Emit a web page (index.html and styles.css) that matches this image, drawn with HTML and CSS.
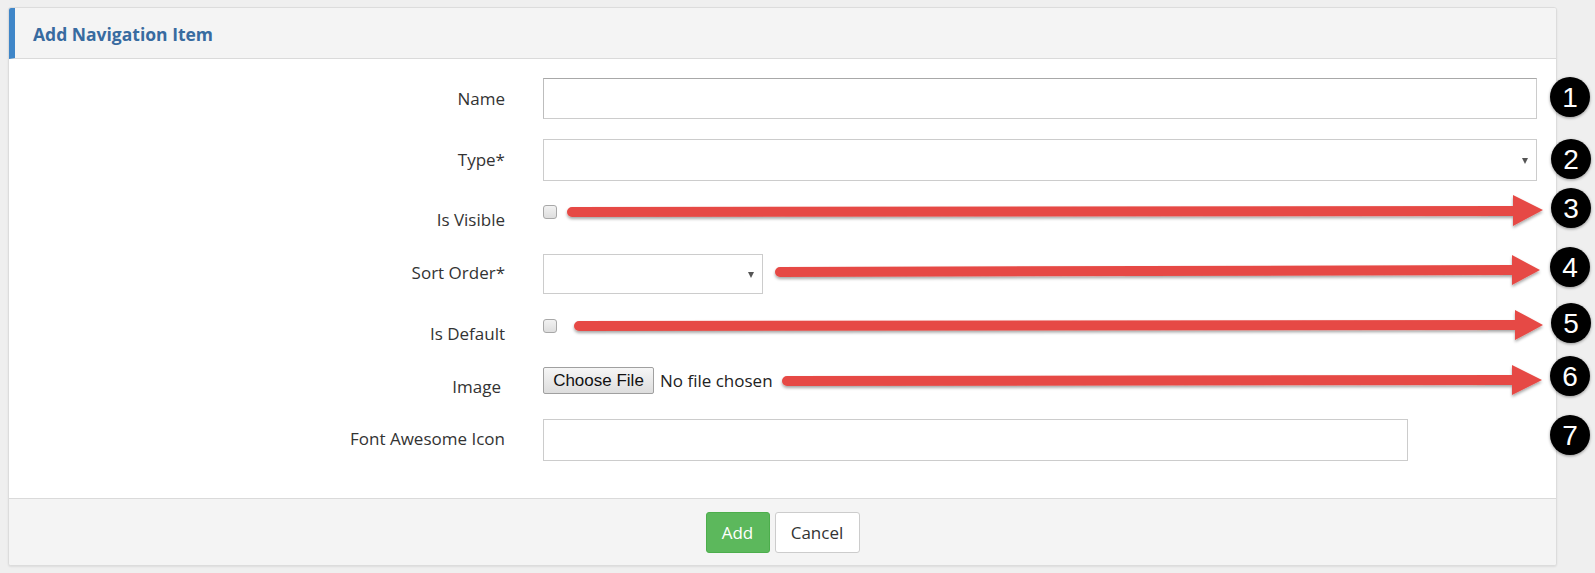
FILE: index.html
```html
<!DOCTYPE html>
<html>
<head>
<meta charset="utf-8">
<link rel="stylesheet" href="styles.css">
</head>
<body>
<div class="page">
  <div class="panel">
    <div class="panel-head"><h3 class="panel-title">Add Navigation Item</h3></div>
    <div class="panel-body">
      <div class="row r1">
        <div class="lbl">Name</div>
        <div class="ctl"><div class="input input-focus w-full"></div></div>
      </div>
      <div class="row r2">
        <div class="lbl">Type*</div>
        <div class="ctl"><div class="input select w-full"></div></div>
      </div>
      <div class="row r3">
        <div class="lbl">Is Visible</div>
        <div class="ctl"><span class="check"></span></div>
      </div>
      <div class="row r4">
        <div class="lbl">Sort Order*</div>
        <div class="ctl"><div class="input select w-small"></div></div>
      </div>
      <div class="row r5">
        <div class="lbl">Is Default</div>
        <div class="ctl"><span class="check"></span></div>
      </div>
      <div class="row r6">
        <div class="lbl lbl-image">Image</div>
        <div class="ctl file"><span class="file-btn">Choose File</span><span class="file-text">No file chosen</span></div>
      </div>
      <div class="row r7">
        <div class="lbl">Font Awesome Icon</div>
        <div class="ctl"><div class="input w-mid"></div></div>
      </div>
    </div>
    <div class="panel-foot">
      <span class="btn btn-add">Add</span>
      <span class="btn btn-cancel">Cancel</span>
    </div>
  </div>

  <svg class="annot" width="1595" height="573" viewBox="0 0 1595 573">
    <defs>
      <filter id="sh" x="-10%" y="-50%" width="120%" height="200%">
        <feDropShadow dx="0" dy="2" stdDeviation="1.5" flood-color="#000" flood-opacity="0.35"/>
      </filter>
      <filter id="csh" x="-30%" y="-30%" width="160%" height="160%">
        <feDropShadow dx="0" dy="1" stdDeviation="1.5" flood-color="#000" flood-opacity="0.4"/>
      </filter>
    </defs>
    <g fill="#e64a45" filter="url(#sh)">
      <path d="M572 207 L1513 206 L1513 195 L1543 210 L1513 226 L1513 216 L572 217 A5 5 0 0 1 572 207 Z"/>
      <path d="M780 267 L1512 265 L1512 255 L1540 270 L1512 285 L1512 275 L780 277 A5 5 0 0 1 780 267 Z"/>
      <path d="M579 321 L1515 320 L1515 310 L1543 325 L1515 340 L1515 330 L579 331 A5 5 0 0 1 579 321 Z"/>
      <path d="M787 376 L1512 375 L1512 365 L1542 380 L1512 395 L1512 385 L787 386 A5 5 0 0 1 787 376 Z"/>
    </g>
    <g class="nums" filter="url(#csh)">
      <circle cx="1570" cy="97" r="20"/>
      <circle cx="1571" cy="159" r="20"/>
      <circle cx="1571" cy="208" r="20"/>
      <circle cx="1570" cy="267" r="20"/>
      <circle cx="1571" cy="323" r="20"/>
      <circle cx="1570" cy="376" r="20"/>
      <circle cx="1570" cy="435" r="20"/>
    </g>
    <g class="digits">
      <text x="1570" y="107">1</text>
      <text x="1571" y="169">2</text>
      <text x="1571" y="218">3</text>
      <text x="1570" y="277">4</text>
      <text x="1571" y="333">5</text>
      <text x="1570" y="386">6</text>
      <text x="1570" y="445">7</text>
    </g>
  </svg>
</div>
</body>
</html>
```
FILE: styles.css
```css
* { box-sizing: border-box; }
html, body { margin: 0; padding: 0; }
body {
  background: #efefef;
  font-family: "Open Sans", "Noto Sans", sans-serif;
  color: #333;
  width: 1595px;
  height: 573px;
  overflow: hidden;
}
.page {
  position: relative;
  width: 1595px;
  height: 573px;
  padding: 7px 0 0 8px;
}
.panel {
  width: 1549px;
  height: 559px;
  background: #fff;
  border: 1px solid #dcdcdc;
  border-radius: 3px;
  box-shadow: 0 1px 2px rgba(0,0,0,0.08);
  display: flex;
  flex-direction: column;
  overflow: hidden;
}
.panel-head {
  height: 51px;
  background: #f4f4f4;
  border-left: 6px solid #3f86c8;
  border-bottom: 1px solid #dadada;
  display: flex;
  align-items: center;
  padding-left: 18px;
}
.panel-title {
  margin: 0;
  font-size: 17.5px;
  font-weight: 700;
  color: #386ba0;
  padding-top: 1px;
}
.panel-body {
  flex: 1;
  padding-top: 19px;
}
.row {
  display: flex;
  align-items: flex-start;
}
.lbl {
  width: 496px;
  text-align: right;
  font-size: 17px;
  line-height: 20px;
  color: #333;
}
.ctl {
  margin-left: 38px;
}
.r1 .lbl { padding-top: 11px; }
.r2 { margin-top: 20px; }
.r2 .lbl { padding-top: 11px; }
.r3 { margin-top: 24px; }
.r3 .lbl { padding-top: 5px; }
.r3 .lbl, .r5 .lbl { height: 27px; }
.r4 { margin-top: 22px; }
.r4 .lbl { padding-top: 9px; }
.r5 { margin-top: 25px; }
.r5 .lbl { padding-top: 5px; }
.r6 { margin-top: 21px; }
.r6 .lbl { padding-top: 10px; height: 31px; }
.r7 { margin-top: 21px; }
.r7 .lbl { padding-top: 10px; }
.lbl-image { padding-right: 4px; }

.input {
  height: 41px;
  border: 1px solid #cccccc;
  background: #fff;
  position: relative;
}
.input-focus { border-top-color: #a8a8a8; border-left-color: #bdbdbd; }
.w-full { width: 994px; }
.r2 .input { height: 42px; }
.w-small { width: 220px; height: 40px; }
.w-mid { width: 865px; height: 42px; }
.select::after {
  content: "";
  position: absolute;
  right: 8px;
  top: 50%;
  margin-top: -2px;
  border-left: 3.5px solid transparent;
  border-right: 3.5px solid transparent;
  border-top: 6px solid #555;
}
.check {
  display: block;
  width: 14px;
  height: 14px;
  border: 1px solid #a8a8a8;
  border-radius: 3px;
  background: linear-gradient(#f2f2f2, #dedede);
}
.file {
  display: flex;
  align-items: center;
  height: 27px;
}
.file-btn {
  display: inline-flex;
  align-items: center;
  justify-content: center;
  width: 111px;
  height: 27px;
  border: 1px solid #a0a0a0;
  border-radius: 2px;
  background: linear-gradient(#f6f6f6, #dddddd);
  font-family: "Liberation Sans", Arial, sans-serif;
  font-size: 17px;
  color: #111;
}
.file-text {
  margin-left: 6px;
  font-size: 17px;
  color: #222;
}
.panel-foot {
  height: 67px;
  border-top: 1px solid #dadada;
  background: #f4f4f4;
  display: flex;
  justify-content: center;
  align-items: flex-start;
  padding-top: 13px;
  gap: 5px;
}
.btn {
  display: inline-flex;
  align-items: center;
  justify-content: center;
  height: 41px;
  border-radius: 3px;
  font-size: 17px;
}
.btn-add {
  width: 64px;
  background: #5cb85c;
  border: 1px solid #4cae4c;
  color: #fff;
}
.btn-cancel {
  width: 85px;
  background: #fff;
  border: 1px solid #cccccc;
  color: #333;
}
.annot {
  position: absolute;
  left: 0;
  top: 0;
  pointer-events: none;
}
.nums circle { fill: #000; }
.digits text {
  fill: #fff;
  font-family: "Liberation Sans", Arial, sans-serif;
  font-size: 28px;
  text-anchor: middle;
}
```
